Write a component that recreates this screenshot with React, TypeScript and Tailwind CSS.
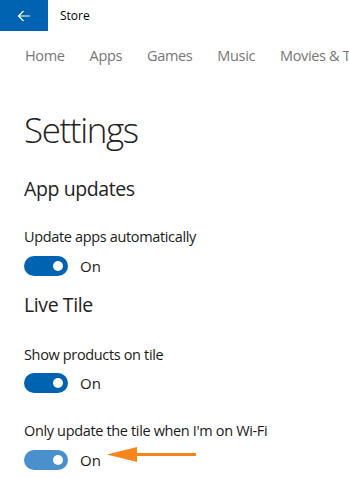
import React from 'react';

const Toggle = ({ light = false }: { light?: boolean }) => (
  <div className="flex items-center h-[20px]">
    <div
      className={`w-[44px] h-[20px] rounded-full flex items-center justify-end pr-[5px] ${
        light ? 'bg-[#4a90cc]' : 'bg-[#0063b1]'
      }`}
    >
      <div className="w-[10px] h-[10px] rounded-full bg-white" />
    </div>
    <span className="ml-[12px] text-[15px] leading-[20px] text-[#1a1a1a]">On</span>
  </div>
);

const App: React.FC = () => {
  const nav = ['Home', 'Apps', 'Games', 'Music', 'Movies & TV'];

  return (
    <div className="relative w-[349px] h-[478px] overflow-hidden bg-white font-['Open_Sans',sans-serif] text-[#1a1a1a]">
      {/* title bar */}
      <div className="flex items-center h-[31px]">
        <div className="w-[48px] h-full bg-[#0063b1] flex items-center justify-center">
          <svg width="14" height="12" viewBox="0 0 14 12" fill="none" stroke="white" strokeWidth="1.2">
            <path d="M13 6H1.5M6.5 1L1.5 6l5 5" />
          </svg>
        </div>
        <span className="ml-[12px] text-[12px] text-black">Store</span>
      </div>

      {/* nav */}
      <div className="flex gap-[25px] pl-[25px] mt-[13px] h-[24px] items-center text-[14.5px] tracking-[-0.35px] text-[#767676] whitespace-nowrap">
        {nav.map((n) => (
          <span key={n}>{n}</span>
        ))}
      </div>

      <div className="pl-[24px]">
        <h1 className="mt-[40px] text-[35px] leading-[44px] font-light tracking-[-1.4px] text-[#222]">Settings</h1>

        <h2 className="mt-[23px] text-[19.5px] leading-[28px] tracking-[-0.4px] text-[#222]">App updates</h2>
        <p className="mt-[24px] text-[14.5px] leading-[20px] tracking-[-0.35px]">Update apps automatically</p>
        <div className="mt-[9px]">
          <Toggle />
        </div>

        <h2 className="mt-[15px] text-[19.5px] leading-[28px] tracking-[-0.4px] text-[#222]">Live Tile</h2>
        <p className="mt-[26px] text-[14.5px] leading-[20px] tracking-[-0.35px]">Show products on tile</p>
        <div className="mt-[8px]">
          <Toggle />
        </div>

        <p className="mt-[28px] text-[14.5px] leading-[20px] tracking-[-0.35px]">Only update the tile when I'm on Wi-Fi</p>
        <div className="mt-[9px]">
          <Toggle light />
        </div>
      </div>

      {/* annotation arrow */}
      <svg className="absolute left-[105px] top-[445px]" width="92" height="19" viewBox="0 0 92 19">
        <polygon points="2,9.5 32,2 32,17" fill="#f7851b" />
        <rect x="30" y="8" width="61" height="3" fill="#f7851b" />
      </svg>
    </div>
  );
};

export default App;
